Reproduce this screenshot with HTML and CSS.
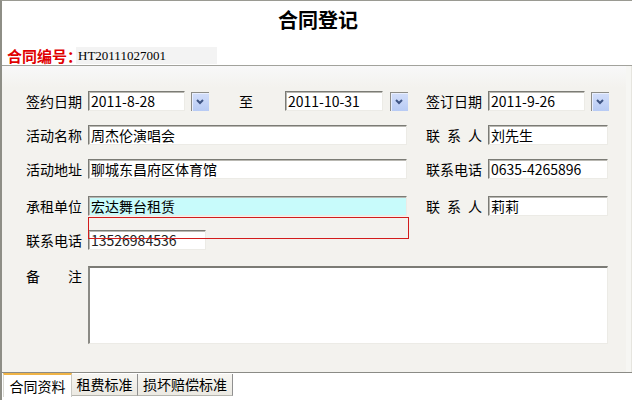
FILE: index.html
```html
<!DOCTYPE html>
<html lang="zh-CN">
<head>
<meta charset="utf-8">
<title>合同登记</title>
<link rel="stylesheet" href="styles.css">
</head>
<body>
<div class="win">
  <header class="hdr">
    <h1 class="title">合同登记</h1>
    <div class="no"><span class="no-lbl">合同编号：</span><span class="no-val">HT20111027001</span></div>
  </header>
  <main class="form">
    <div class="row">
      <span class="lbl">签约日期</span>
      <div class="left">
        <div class="field date">2011-8-28</div>
        <span class="btn"><svg viewBox="0 0 16 17" width="16" height="17"><path d="M5 7 L8 10 L11 7" fill="none" stroke="#3f5585" stroke-width="2"/></svg></span>
        <span class="to">至</span>
        <div class="field date2">2011-10-31</div>
        <span class="btn b2"><svg viewBox="0 0 16 17" width="16" height="17"><path d="M5 7 L8 10 L11 7" fill="none" stroke="#3f5585" stroke-width="2"/></svg></span>
      </div>
      <span class="lbl rl">签订日期</span>
      <div class="field date">2011-9-26</div>
      <span class="btn"><svg viewBox="0 0 16 17" width="16" height="17"><path d="M5 7 L8 10 L11 7" fill="none" stroke="#3f5585" stroke-width="2"/></svg></span>
    </div>
    <div class="row">
      <span class="lbl">活动名称</span>
      <div class="field wide">周杰伦演唱会</div>
      <span class="lbl rl">联 系 人</span>
      <div class="field short">刘先生</div>
    </div>
    <div class="row">
      <span class="lbl">活动地址</span>
      <div class="field wide">聊城东昌府区体育馆</div>
      <span class="lbl rl">联系电话</span>
      <div class="field short">0635-4265896</div>
    </div>
    <div class="row r4">
      <span class="lbl">承租单位</span>
      <div class="field wide hl">宏达舞台租赁</div>
      <span class="lbl rl">联 系 人</span>
      <div class="field short">莉莉</div>
    </div>
    <div class="row r5">
      <span class="lbl">联系电话</span>
      <div class="field phone">13526984536</div>
    </div>
    <div class="row r6">
      <span class="lbl">备 注</span>
      <div class="field memo"></div>
    </div>
    <div class="focus-box"></div>
  </main>
  <nav class="tabs">
    <span class="tab active">合同资料</span>
    <span class="tab t2">租费标准</span>
    <span class="tab t3">损坏赔偿标准</span>
  </nav>
</div>
</body>
</html>
```

FILE: styles.css
```css
html, body {
  margin: 0;
  padding: 0;
  background: #ffffff;
}
.win {
  position: relative;
  width: 632px;
  height: 400px;
  box-sizing: border-box;
  border-top: 1px solid #9a9a92;
  border-left: 2px solid #8e8e86;
  font-family: "Noto Sans CJK SC", "Liberation Sans", sans-serif;
  font-size: 14px;
  color: #000;
  overflow: hidden;
}
.hdr {
  height: 65px;
  box-sizing: border-box;
  padding-top: 7px;
  background: #fff;
  border-bottom: 1px solid #a2a29c;
}
.title {
  margin: 0;
  height: 24px;
  line-height: 24px;
  font-size: 20px;
  font-weight: bold;
  text-align: center;
  padding-left: 2px;
}
.no {
  display: flex;
  align-items: center;
  margin-top: 15px;
  padding-left: 5px;
  height: 17px;
}
.no-lbl {
  color: #e00000;
  font-weight: bold;
  font-size: 15px;
  line-height: 17px;
  margin-right: -6px;
}
.no-val {
  position: relative;
  width: 139px;
  height: 17px;
  padding-left: 2px;
  background: #f3f3f3;
  font-family: "Liberation Serif", serif;
  font-size: 13px;
  line-height: 18px;
}
.form {
  position: relative;
  height: 306px;
  box-sizing: border-box;
  padding-top: 25px;
  padding-left: 24px;
  background: linear-gradient(#f8f8f9, #f3f2ee 22px);
  border-right: 1px solid #e6e5df;
  box-shadow: inset -5px 0 0 #f6f6f3;
}
.row {
  display: flex;
  align-items: center;
  height: 20px;
  margin-top: 14px;
}
.row:first-child {
  margin-top: 0;
}
.row.r4 { margin-top: 17px; }
.row.r6 {
  margin-top: 16px;
  align-items: flex-start;
  height: 78px;
}
.lbl {
  flex: none;
  width: 56px;
  margin-right: 6px;
  line-height: 20px;
  text-align: justify;
  text-align-last: justify;
  white-space: nowrap;
}
.lbl.rl {
  margin-left: 19px;
}
.left {
  flex: none;
  display: flex;
  align-items: center;
  width: 319px;
}
.field {
  flex: none;
  box-sizing: border-box;
  height: 20px;
  padding-left: 2px;
  line-height: 19px;
  background: #fff;
  border-top: 1px solid #7b7b75;
  border-left: 1px solid #7b7b75;
  border-right: 1px solid #ecebe6;
  border-bottom: 1px solid #ecebe6;
  box-shadow: inset 1px 1px 0 #b9b8b2;
  white-space: nowrap;
  overflow: hidden;
}
.field.date { width: 97px; }
.field.date2 { width: 98px; }
.field.wide { width: 319px; }
.field.short { width: 120px; }
.field.hl { background: #c8fbfb; }
.field.phone {
  width: 118px;
  color: #222;
}
.field.memo {
  width: 520px;
  height: 78px;
  border-top: 2px solid #7b7b75;
  border-left: 2px solid #8a8a84;
  box-shadow: none;
}
.btn {
  flex: none;
  display: flex;
  box-sizing: border-box;
  width: 18px;
  height: 19px;
  margin-left: 6px;
  border-top: 1px solid #8d8d88;
  border-left: 1px solid #8d8d88;
  background: linear-gradient(#d3defa, #b8cbf4);
  box-shadow: inset 1px 1px 0 #e9efff;
}
.btn.b2 { margin-left: 7px; }
.to {
  flex: none;
  margin-left: 30px;
  margin-right: 32px;
  line-height: 20px;
}
.focus-box {
  position: absolute;
  left: 86px;
  top: 151px;
  width: 321px;
  height: 22px;
  box-sizing: border-box;
  border: 1px solid #d21c1c;
}
.tabs {
  display: flex;
  align-items: flex-start;
  height: 26px;
  box-sizing: border-box;
  padding-left: 1px;
  border-top: 1px solid #8b8b86;
  background: #fff;
}
.tab {
  box-sizing: border-box;
  height: 22px;
  margin-top: 1px;
  line-height: 21px;
  text-align: center;
  white-space: nowrap;
  background: linear-gradient(#f7f6f2, #ebe9e2);
  border-right: 1px solid #909090;
  border-bottom: 1px solid #b6b6b0;
}
.tab.active {
  width: 69px;
  margin-top: 0;
  height: 24px;
  line-height: 23px;
  background: #fff;
  border-top: 2px solid #f0b446;
  border-left: 1px solid #d8d8d2;
  border-right: 1px solid #c9c9c3;
  border-bottom: none;
}
.tab.t2 { width: 66px; }
.tab.t3 { width: 95px; }
```
